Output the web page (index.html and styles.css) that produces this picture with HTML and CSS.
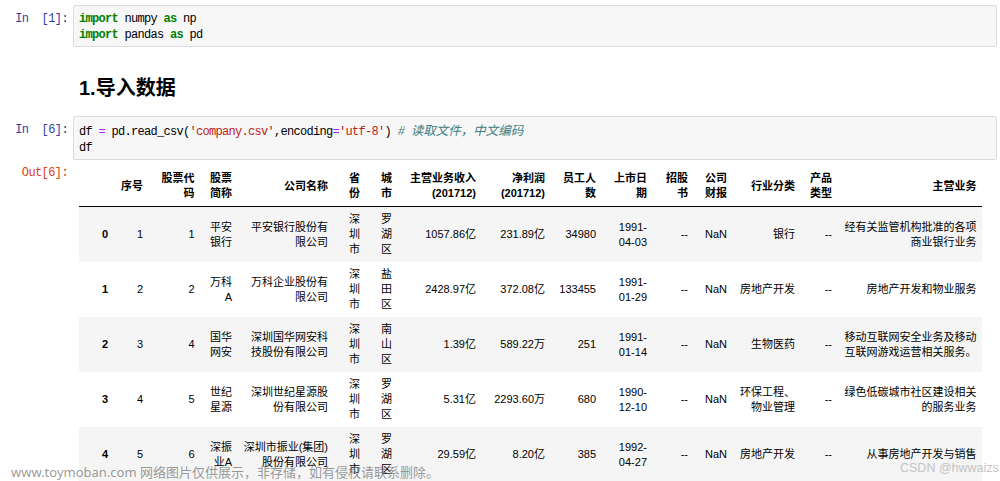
FILE: index.html
```html
<!DOCTYPE html>
<html lang="zh">
<head>
<meta charset="utf-8">
<title>company.csv</title>
<link rel="stylesheet" href="styles.css">
</head>
<body>
<div class="notebook">
  <div class="cell">
    <div class="prompt in">In&nbsp;&nbsp;[1]:</div>
    <div class="input"><pre class="code"><span class="kw">import</span> numpy <span class="kw">as</span> np
<span class="kw">import</span> pandas <span class="kw">as</span> pd</pre></div>
  </div>
  <div class="cell md">
    <div class="prompt"></div>
    <div class="md-body"><h2>1.导入数据</h2></div>
  </div>
  <div class="cell">
    <div class="prompt in">In&nbsp;&nbsp;[6]:</div>
    <div class="input"><pre class="code">df <span class="op">=</span> pd.read_csv(<span class="str">'company.csv'</span>,encoding<span class="op">=</span><span class="str">'utf-8'</span>) <span class="cm"># <span class="cjk">读取文件，中文编码</span></span>
df</pre></div>
  </div>
  <div class="cell out">
    <div class="prompt outp">Out[6]:</div>
    <div class="output">
      <table class="df">
        <colgroup>
          <col><col><col><col><col><col><col><col><col><col><col><col><col><col><col><col>
        </colgroup>
        <thead>
          <tr>
            <th></th><th>序号</th><th>股票代码</th><th>股票简称</th><th>公司名称</th><th>省份</th><th>城市</th><th>主营业务收入 (201712)</th><th>净利润 (201712)</th><th>员工人数</th><th>上市日期</th><th>招股书</th><th>公司财报</th><th>行业分类</th><th>产品类型</th><th>主营业务</th>
          </tr>
        </thead>
        <tbody>
          <tr>
            <th>0</th><td>1</td><td>1</td><td>平安银行</td><td>平安银行股份有限公司</td><td>深圳市</td><td>罗湖区</td><td>1057.86亿</td><td>231.89亿</td><td>34980</td><td>1991-&#8203;04-03</td><td>--</td><td>NaN</td><td>银行</td><td>--</td><td>经有关监管机构批准的各项商业银行业务</td>
          </tr>
          <tr>
            <th>1</th><td>2</td><td>2</td><td>万科A</td><td>万科企业股份有限公司</td><td>深圳市</td><td>盐田区</td><td>2428.97亿</td><td>372.08亿</td><td>133455</td><td>1991-&#8203;01-29</td><td>--</td><td>NaN</td><td>房地产开发</td><td>--</td><td>房地产开发和物业服务</td>
          </tr>
          <tr>
            <th>2</th><td>3</td><td>4</td><td>国华网安</td><td>深圳国华网安科技股份有限公司</td><td>深圳市</td><td>南山区</td><td>1.39亿</td><td>589.22万</td><td>251</td><td>1991-&#8203;01-14</td><td>--</td><td>NaN</td><td>生物医药</td><td>--</td><td>移动互联网安全业务及移动互联网游戏运营相关服务。</td>
          </tr>
          <tr>
            <th>3</th><td>4</td><td>5</td><td>世纪星源</td><td>深圳世纪星源股份有限公司</td><td>深圳市</td><td>罗湖区</td><td>5.31亿</td><td>2293.60万</td><td>680</td><td>1990-&#8203;12-10</td><td>--</td><td>NaN</td><td>环保工程、物业管理</td><td>--</td><td>绿色低碳城市社区建设相关的服务业务</td>
          </tr>
          <tr>
            <th>4</th><td>5</td><td>6</td><td>深振业A</td><td>深圳市振业(集团)股份有限公司</td><td>深圳市</td><td>罗湖区</td><td>29.59亿</td><td>8.20亿</td><td>385</td><td>1992-&#8203;04-27</td><td>--</td><td>NaN</td><td>房地产开发</td><td>--</td><td>从事房地产开发与销售</td>
          </tr>
        </tbody>
      </table>
    </div>
  </div>
</div>
<div class="watermark">www.toymoban.com 网络图片仅供展示，非存储，如有侵权请联系删除。</div>
<div class="csdn">CSDN @hwwaizs</div>
</body>
</html>
```

FILE: styles.css
```css
html, body {
  margin: 0;
  padding: 0;
  background: #ffffff;
}

body {
  position: relative;
  width: 1000px;
  height: 481px;
  overflow: hidden;
  font-family: "Liberation Sans", "Noto Sans CJK SC", sans-serif;
  color: #000;
}

.notebook {
  padding-top: 5px;
}

.cell {
  display: flex;
  align-items: flex-start;
}

.prompt {
  flex: 0 0 68px;
  width: 68px;
  box-sizing: border-box;
  text-align: right;
  white-space: pre;
  font-family: "Liberation Mono", "Noto Sans CJK SC", monospace;
  font-size: 12px;
  letter-spacing: -0.6px;
  line-height: 16px;
}

.prompt.in {
  color: #303F9F;
  padding-top: 6px;
}

.prompt.outp {
  color: #D84315;
  line-height: 15px;
}

.input {
  flex: 1;
  margin-left: 5px;
  margin-right: 3px;
  border: 1px solid #dcdcdc;
  border-radius: 2px;
  background: #f7f7f7;
}

.code {
  margin: 0;
  padding: 5px 5px 3px 5px;
  font-family: "Liberation Mono", "Noto Sans CJK SC", monospace;
  font-size: 12px;
  letter-spacing: -0.7px;
  line-height: 16px;
  color: #000;
  white-space: pre;
}

.kw {
  color: #008000;
  font-weight: bold;
}

.op {
  color: #AA22FF;
}

.str {
  color: #BA2121;
}

.cm {
  color: #408080;
  font-style: italic;
}

.cjk {
  font-family: "Noto Sans CJK SC", sans-serif;
  font-size: 12.5px;
  letter-spacing: 0;
}

.cell.md {
  margin-top: 29px;
}

.md-body {
  flex: 1;
  margin-left: 11px;
}

.md-body h2 {
  margin: 0;
  font-family: "Liberation Sans", "Noto Sans CJK SC", sans-serif;
  font-weight: bold;
  font-size: 20px;
  line-height: 24px;
  color: #000;
}

.cell.md + .cell {
  margin-top: 16px;
}

.cell.out {
  margin-top: 6px;
}

.output {
  flex: 1;
  margin-left: 11px;
}

.df {
  table-layout: fixed;
  width: 903px;
  border-collapse: collapse;
  border-spacing: 0;
  font-size: 11px;
  line-height: 15px;
  color: #000;
}

.df col:nth-child(1) { width: 34.5px; }
.df col:nth-child(2) { width: 35px; }
.df col:nth-child(3) { width: 51.5px; }
.df col:nth-child(4) { width: 37.5px; }
.df col:nth-child(5) { width: 96px; }
.df col:nth-child(6) { width: 32px; }
.df col:nth-child(7) { width: 32px; }
.df col:nth-child(8) { width: 84px; }
.df col:nth-child(9) { width: 69px; }
.df col:nth-child(10) { width: 51px; }
.df col:nth-child(11) { width: 51px; }
.df col:nth-child(12) { width: 41px; }
.df col:nth-child(13) { width: 39px; }
.df col:nth-child(14) { width: 68px; }
.df col:nth-child(15) { width: 37px; }
.df col:nth-child(16) { width: 144.5px; }

.df th,
.df td {
  padding: 5px 5.5px;
  text-align: right;
  vertical-align: middle;
  border: none;
}

.df th {
  font-weight: bold;
}

.df td {
  font-weight: normal;
}

.df thead {
  border-bottom: 1px solid #000;
}

.df tbody tr:nth-child(odd) {
  background: #f5f5f5;
}

.watermark {
  position: absolute;
  left: 11px;
  top: 464px;
  font-family: "Noto Sans", "Noto Sans CJK SC", sans-serif;
  font-size: 13px;
  line-height: 17px;
  color: rgba(120, 120, 120, 0.75);
  white-space: nowrap;
}

.csdn {
  position: absolute;
  left: 900px;
  top: 460px;
  font-family: "Liberation Sans", sans-serif;
  font-size: 12.5px;
  line-height: 16px;
  color: #c4c4c4;
  white-space: nowrap;
}
```
